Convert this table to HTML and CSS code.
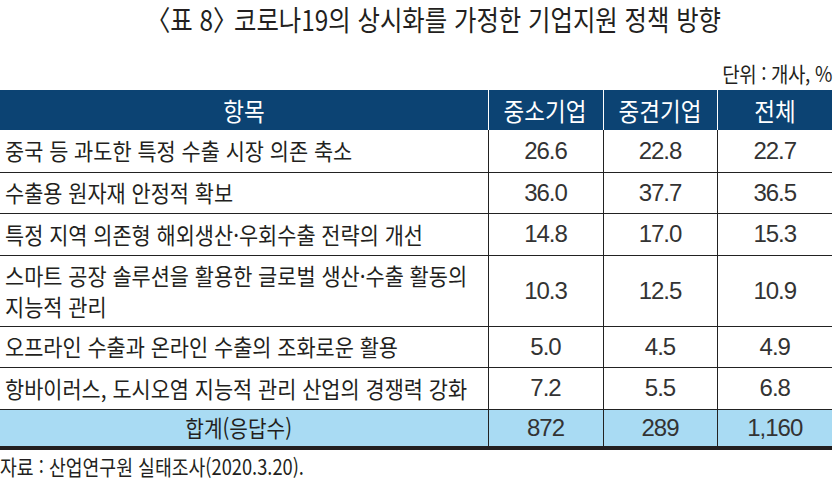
FILE: index.html
```html
<!DOCTYPE html>
<html lang="ko">
<head>
<meta charset="utf-8">
<title>표 8 코로나19의 상시화를 가정한 기업지원 정책 방향</title>
<link rel="stylesheet" href="styles.css">
</head>
<body>
<div class="page">
  <h1 class="title"><span class="cond">〈표 8<span class="rb">〉</span> 코로나19의 상시화를 가정한 기업지원 정책 방향</span></h1>
  <div class="unit"><span class="cond-r">단위 : 개사, %</span></div>
  <table class="data">
    <colgroup>
      <col class="c-item">
      <col class="c-num">
      <col class="c-num2">
      <col class="c-num">
    </colgroup>
    <thead>
      <tr>
        <th><span class="cond">항목</span></th>
        <th><span class="cond">중소기업</span></th>
        <th><span class="cond">중견기업</span></th>
        <th><span class="cond">전체</span></th>
      </tr>
    </thead>
    <tbody>
      <tr class="r1">
        <td class="label"><span class="cond-l">중국 등 과도한 특정 수출 시장 의존 축소</span></td>
        <td class="num">26.6</td><td class="num">22.8</td><td class="num">22.7</td>
      </tr>
      <tr class="r2">
        <td class="label"><span class="cond-l">수출용 원자재 안정적 확보</span></td>
        <td class="num">36.0</td><td class="num">37.7</td><td class="num">36.5</td>
      </tr>
      <tr class="r1">
        <td class="label"><span class="cond-l">특정 지역 의존형 해외생산·우회수출 전략의 개선</span></td>
        <td class="num">14.8</td><td class="num">17.0</td><td class="num">15.3</td>
      </tr>
      <tr class="r-tall">
        <td class="label"><span class="cond-l">스마트 공장 솔루션을 활용한 글로벌 생산·수출 활동의<br>지능적 관리</span></td>
        <td class="num">10.3</td><td class="num">12.5</td><td class="num">10.9</td>
      </tr>
      <tr class="r2">
        <td class="label"><span class="cond-l">오프라인 수출과 온라인 수출의 조화로운 활용</span></td>
        <td class="num">5.0</td><td class="num">4.5</td><td class="num">4.9</td>
      </tr>
      <tr class="r1">
        <td class="label"><span class="cond-l">항바이러스, 도시오염 지능적 관리 산업의 경쟁력 강화</span></td>
        <td class="num">7.2</td><td class="num">5.5</td><td class="num">6.8</td>
      </tr>
    </tbody>
    <tfoot>
      <tr class="total">
        <td class="label center"><span class="cond">합계(응답수)</span></td>
        <td class="num">872</td><td class="num">289</td><td class="num">1,160</td>
      </tr>
    </tfoot>
  </table>
  <p class="source"><span class="cond-l">자료 : 산업연구원 실태조사(2020.3.20).</span></p>
</div>
</body>
</html>
```

FILE: styles.css
```css
* { box-sizing: border-box; }

html, body {
  margin: 0;
  padding: 0;
  background: #ffffff;
}

body {
  font-family: "Noto Sans CJK KR", "Noto Sans", sans-serif;
  color: #231f20;
  overflow: hidden;
}

.page {
  width: 836px;
  height: 480px;
}

/* condensed text helpers */
.cond,
.cond-l,
.cond-r {
  display: inline-block;
  white-space: nowrap;
}
.cond { transform: scaleX(0.88); transform-origin: center; }
.cond-l { transform: scaleX(0.905); transform-origin: left center; }
.cond-r { transform: scaleX(0.9); transform-origin: right center; }

.title {
  margin: 0;
  height: 38px;
  line-height: 38px;
  font-size: 28px;
  font-weight: 400;
  text-align: center;
  padding-left: 30px;
  white-space: nowrap;
}

.title .cond { transform: scaleX(0.87); }

.rb { letter-spacing: -0.42em; }

.unit {
  width: 832px;
  margin-top: 24px;
  height: 28px;
  line-height: 22px;
  font-size: 21px;
  text-align: right;
  letter-spacing: -0.4px;
}

.data {
  width: 832px;
  border-collapse: collapse;
  table-layout: fixed;
}

.c-item { width: 488px; }
.c-num { width: 115px; }
.c-num2 { width: 114px; }

.data th {
  background: #0c4373;
  color: #ffffff;
  font-weight: 400;
  font-size: 25px;
  height: 40px;
  padding: 0;
  text-align: center;
  border-left: 1px solid #ffffff;
  line-height: 28px;
}

.data th .cond { transform: scaleX(0.9); }

.data th:first-child { border-left: none; }

.data td {
  padding: 0;
  border-bottom: 1px solid #222222;
  border-left: 1px solid #222222;
  vertical-align: middle;
}

.data td:first-child { border-left: none; }

.data .label {
  font-size: 23px;
  padding-left: 5px;
  line-height: 31px;
  overflow: visible;
}

.data .label.center {
  text-align: center;
  padding-left: 0;
  padding-right: 10px;
}

.data .num {
  text-align: center;
  font-family: "Liberation Sans", Arial, sans-serif;
  font-size: 24px;
  letter-spacing: -1px;
  color: #333333;
}

.r1 td { height: 42px; }
.r2 td { height: 41px; }
.r-tall td { height: 71px; }

.total td {
  height: 39px;
  background: #a9dbf3;
  border-bottom: 4px solid #231f20;
}

.source {
  margin: 3px 0 0;
  font-size: 21px;
  line-height: 26px;
  padding-left: 0;
}

.source .cond-l { transform: scaleX(0.87); }
```
